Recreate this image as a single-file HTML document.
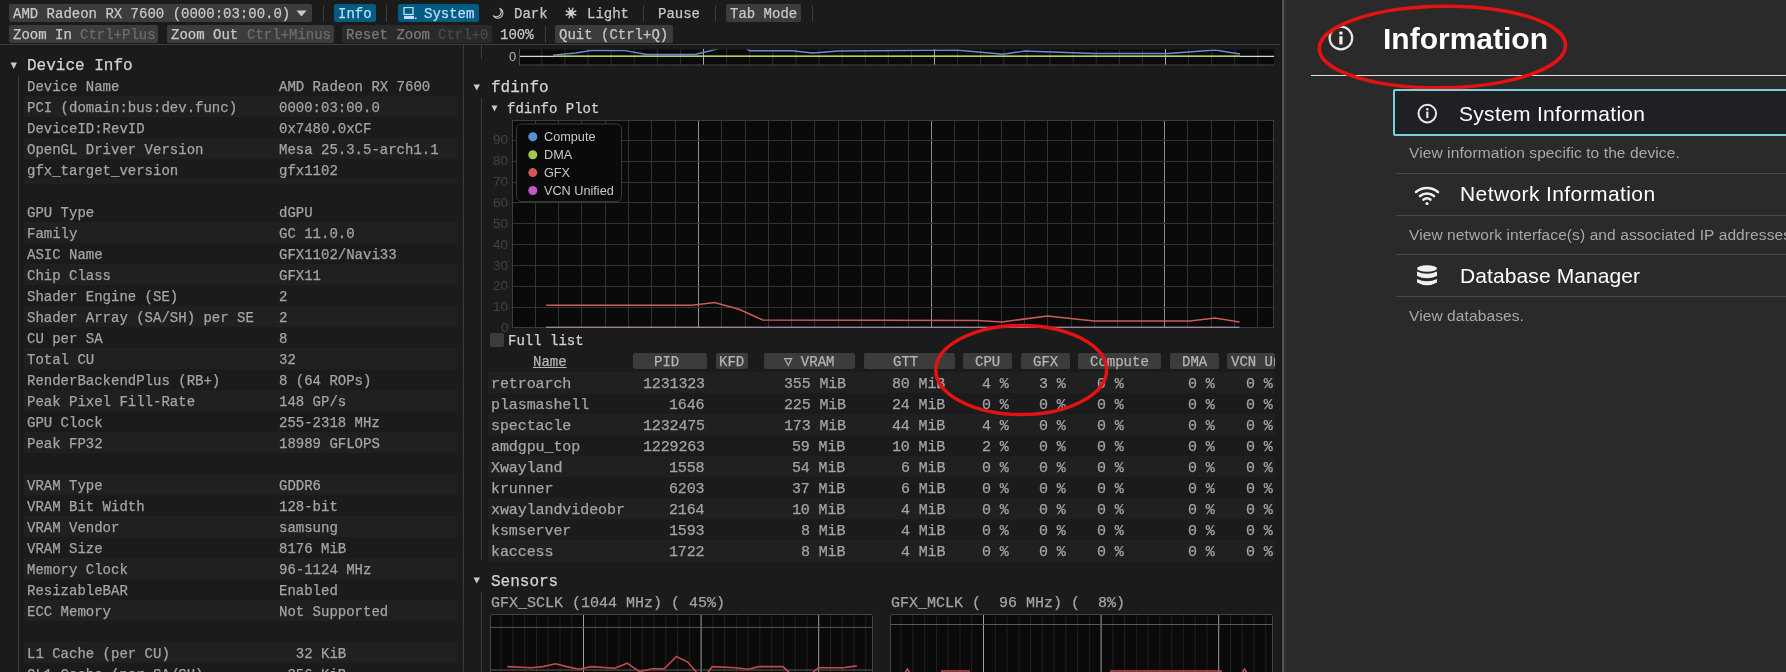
<!DOCTYPE html><html><head><meta charset="utf-8"><style>
html,body{margin:0;padding:0;width:1786px;height:672px;overflow:hidden;background:#1b1b1b;}
.t{position:absolute;white-space:pre;line-height:20px;font-family:"Liberation Mono", monospace;-webkit-text-stroke:0.25px currentColor;will-change:transform;}
.s{position:absolute;white-space:pre;line-height:30px;font-family:"Liberation Sans", sans-serif;will-change:transform;}
.r{position:absolute;}
svg{position:absolute;}
</style></head><body>
<div class="r" style="left:9px;top:4px;width:303px;height:18px;background:#3c3c3c;border-radius:2px"></div>
<div class="t" style="left:13.00px;top:4.17px;font-size:14px;color:#c8c8c8;letter-spacing:0px;">AMD Radeon RX 7600 (0000:03:00.0)</div>
<svg style="left:296px;top:10px" width="11" height="7"><path d="M0.5 0.5 L10.5 0.5 L5.5 6.5 Z" fill="#c8c8c8"/></svg>
<div class="r" style="left:323px;top:5px;width:1px;height:17px;background:#3c3c3c;"></div>
<div class="r" style="left:334px;top:4px;width:42px;height:18px;background:#005c80;border-radius:2px"></div>
<div class="t" style="left:338.00px;top:4.17px;font-size:14px;color:#c0deff;letter-spacing:0px;">Info</div>
<div class="r" style="left:386px;top:5px;width:1px;height:17px;background:#3c3c3c;"></div>
<div class="r" style="left:398px;top:4px;width:81px;height:18px;background:#005c80;border-radius:2px"></div>
<svg style="left:402.8px;top:7px" width="14" height="13"><rect x="1" y="0.5" width="9" height="7" fill="none" stroke="#c0deff" stroke-width="1.3"/><rect x="1" y="9" width="10" height="3" fill="#c0deff"/><rect x="12" y="10.5" width="1.5" height="1.5" fill="#c0deff"/></svg>
<div class="t" style="left:424.00px;top:4.17px;font-size:14px;color:#c0deff;letter-spacing:0px;">System</div>
<svg style="left:492px;top:7px" width="13" height="13"><path d="M7.5 1.2 A5.2 5.2 0 1 1 1.2 8.6 A4.6 4.6 0 0 0 7.5 1.2 Z" fill="none" stroke="#c8c8c8" stroke-width="1.1"/></svg>
<div class="t" style="left:514.00px;top:4.17px;font-size:14px;color:#c8c8c8;letter-spacing:0px;">Dark</div>
<svg style="left:565px;top:7px" width="12" height="12"><circle cx="6" cy="6" r="3" fill="#c8c8c8"/><line x1="8.77" y1="7.15" x2="10.80" y2="7.99" stroke="#c8c8c8" stroke-width="1.4" stroke-linecap="round"/><line x1="7.15" y1="8.77" x2="7.99" y2="10.80" stroke="#c8c8c8" stroke-width="1.4" stroke-linecap="round"/><line x1="4.85" y1="8.77" x2="4.01" y2="10.80" stroke="#c8c8c8" stroke-width="1.4" stroke-linecap="round"/><line x1="3.23" y1="7.15" x2="1.20" y2="7.99" stroke="#c8c8c8" stroke-width="1.4" stroke-linecap="round"/><line x1="3.23" y1="4.85" x2="1.20" y2="4.01" stroke="#c8c8c8" stroke-width="1.4" stroke-linecap="round"/><line x1="4.85" y1="3.23" x2="4.01" y2="1.20" stroke="#c8c8c8" stroke-width="1.4" stroke-linecap="round"/><line x1="7.15" y1="3.23" x2="7.99" y2="1.20" stroke="#c8c8c8" stroke-width="1.4" stroke-linecap="round"/><line x1="8.77" y1="4.85" x2="10.80" y2="4.01" stroke="#c8c8c8" stroke-width="1.4" stroke-linecap="round"/></svg>
<div class="t" style="left:587.00px;top:4.17px;font-size:14px;color:#c8c8c8;letter-spacing:0px;">Light</div>
<div class="r" style="left:643px;top:5px;width:1px;height:17px;background:#3c3c3c;"></div>
<div class="t" style="left:658.00px;top:4.17px;font-size:14px;color:#c8c8c8;letter-spacing:0px;">Pause</div>
<div class="r" style="left:715px;top:5px;width:1px;height:17px;background:#3c3c3c;"></div>
<div class="r" style="left:726px;top:4px;width:75px;height:18px;background:#3c3c3c;border-radius:2px"></div>
<div class="t" style="left:730.00px;top:4.17px;font-size:14px;color:#c8c8c8;letter-spacing:0px;">Tab Mode</div>
<div class="r" style="left:812px;top:5px;width:1px;height:17px;background:#3c3c3c;"></div>
<div class="r" style="left:9px;top:25px;width:149px;height:18px;background:#3c3c3c;border-radius:2px"></div>
<div class="t" style="left:13.00px;top:25.17px;font-size:14px;color:#c8c8c8;letter-spacing:0px;">Zoom In</div>
<div class="t" style="left:80.20px;top:25.17px;font-size:14px;color:#6c6c6c;letter-spacing:0px;">Ctrl+Plus</div>
<div class="r" style="left:167px;top:25px;width:167px;height:18px;background:#3c3c3c;border-radius:2px"></div>
<div class="t" style="left:171.00px;top:25.17px;font-size:14px;color:#c8c8c8;letter-spacing:0px;">Zoom Out</div>
<div class="t" style="left:246.60px;top:25.17px;font-size:14px;color:#6c6c6c;letter-spacing:0px;">Ctrl+Minus</div>
<div class="r" style="left:342px;top:25px;width:150px;height:18px;background:#2a2a2a;border-radius:2px"></div>
<div class="t" style="left:346.00px;top:25.17px;font-size:14px;color:#7a7a7a;letter-spacing:0px;">Reset Zoom</div>
<div class="t" style="left:438.40px;top:25.17px;font-size:14px;color:#4a4a4a;letter-spacing:0px;">Ctrl+0</div>
<div class="t" style="left:500.00px;top:25.17px;font-size:14px;color:#c8c8c8;letter-spacing:0px;">100%</div>
<div class="r" style="left:545px;top:26px;width:1px;height:17px;background:#3c3c3c;"></div>
<div class="r" style="left:555px;top:25px;width:118px;height:18px;background:#3c3c3c;border-radius:2px"></div>
<div class="t" style="left:559.00px;top:25.17px;font-size:14px;color:#c8c8c8;letter-spacing:0px;">Quit (Ctrl+Q)</div>
<div class="r" style="left:0px;top:44px;width:1280px;height:1px;background:#3c3c3c;"></div>
<div class="r" style="left:463px;top:45px;width:1px;height:627px;background:#3c3c3c;"></div>
<svg style="left:10px;top:62px" width="8" height="8"><path d="M0.5 0.5 L7 0.5 L3.75 7 Z" fill="#c8c8c8"/></svg>
<div class="t" style="left:27.00px;top:55.54px;font-size:16px;color:#d2d2d2;letter-spacing:0px;">Device Info</div>
<div class="r" style="left:18px;top:76px;width:1px;height:600px;background:#3c3c3c;"></div>
<div class="t" style="left:27.00px;top:76.87px;font-size:14px;color:#a4a4a4;letter-spacing:0px;">Device Name</div>
<div class="t" style="left:279.00px;top:76.87px;font-size:14px;color:#a4a4a4;letter-spacing:0px;">AMD Radeon RX 7600</div>
<div class="r" style="left:24px;top:96px;width:433px;height:21px;background:#202020;"></div>
<div class="t" style="left:27.00px;top:97.87px;font-size:14px;color:#a4a4a4;letter-spacing:0px;">PCI (domain:bus:dev.func)</div>
<div class="t" style="left:279.00px;top:97.87px;font-size:14px;color:#a4a4a4;letter-spacing:0px;">0000:03:00.0</div>
<div class="t" style="left:27.00px;top:118.87px;font-size:14px;color:#a4a4a4;letter-spacing:0px;">DeviceID:RevID</div>
<div class="t" style="left:279.00px;top:118.87px;font-size:14px;color:#a4a4a4;letter-spacing:0px;">0x7480.0xCF</div>
<div class="r" style="left:24px;top:138px;width:433px;height:21px;background:#202020;"></div>
<div class="t" style="left:27.00px;top:139.87px;font-size:14px;color:#a4a4a4;letter-spacing:0px;">OpenGL Driver Version</div>
<div class="t" style="left:279.00px;top:139.87px;font-size:14px;color:#a4a4a4;letter-spacing:0px;">Mesa 25.3.5-arch1.1</div>
<div class="t" style="left:27.00px;top:160.87px;font-size:14px;color:#a4a4a4;letter-spacing:0px;">gfx_target_version</div>
<div class="t" style="left:279.00px;top:160.87px;font-size:14px;color:#a4a4a4;letter-spacing:0px;">gfx1102</div>
<div class="r" style="left:24px;top:177.5px;width:433px;height:6.5px;background:#202020;"></div>
<div class="t" style="left:27.00px;top:202.87px;font-size:14px;color:#a4a4a4;letter-spacing:0px;">GPU Type</div>
<div class="t" style="left:279.00px;top:202.87px;font-size:14px;color:#a4a4a4;letter-spacing:0px;">dGPU</div>
<div class="r" style="left:24px;top:222px;width:433px;height:21px;background:#202020;"></div>
<div class="t" style="left:27.00px;top:223.87px;font-size:14px;color:#a4a4a4;letter-spacing:0px;">Family</div>
<div class="t" style="left:279.00px;top:223.87px;font-size:14px;color:#a4a4a4;letter-spacing:0px;">GC 11.0.0</div>
<div class="t" style="left:27.00px;top:244.87px;font-size:14px;color:#a4a4a4;letter-spacing:0px;">ASIC Name</div>
<div class="t" style="left:279.00px;top:244.87px;font-size:14px;color:#a4a4a4;letter-spacing:0px;">GFX1102/Navi33</div>
<div class="r" style="left:24px;top:264px;width:433px;height:21px;background:#202020;"></div>
<div class="t" style="left:27.00px;top:265.87px;font-size:14px;color:#a4a4a4;letter-spacing:0px;">Chip Class</div>
<div class="t" style="left:279.00px;top:265.87px;font-size:14px;color:#a4a4a4;letter-spacing:0px;">GFX11</div>
<div class="t" style="left:27.00px;top:286.87px;font-size:14px;color:#a4a4a4;letter-spacing:0px;">Shader Engine (SE)</div>
<div class="t" style="left:279.00px;top:286.87px;font-size:14px;color:#a4a4a4;letter-spacing:0px;">2</div>
<div class="r" style="left:24px;top:306px;width:433px;height:21px;background:#202020;"></div>
<div class="t" style="left:27.00px;top:307.87px;font-size:14px;color:#a4a4a4;letter-spacing:0px;">Shader Array (SA/SH) per SE</div>
<div class="t" style="left:279.00px;top:307.87px;font-size:14px;color:#a4a4a4;letter-spacing:0px;">2</div>
<div class="t" style="left:27.00px;top:328.87px;font-size:14px;color:#a4a4a4;letter-spacing:0px;">CU per SA</div>
<div class="t" style="left:279.00px;top:328.87px;font-size:14px;color:#a4a4a4;letter-spacing:0px;">8</div>
<div class="r" style="left:24px;top:348px;width:433px;height:21px;background:#202020;"></div>
<div class="t" style="left:27.00px;top:349.87px;font-size:14px;color:#a4a4a4;letter-spacing:0px;">Total CU</div>
<div class="t" style="left:279.00px;top:349.87px;font-size:14px;color:#a4a4a4;letter-spacing:0px;">32</div>
<div class="t" style="left:27.00px;top:370.87px;font-size:14px;color:#a4a4a4;letter-spacing:0px;">RenderBackendPlus (RB+)</div>
<div class="t" style="left:279.00px;top:370.87px;font-size:14px;color:#a4a4a4;letter-spacing:0px;">8 (64 ROPs)</div>
<div class="r" style="left:24px;top:390px;width:433px;height:21px;background:#202020;"></div>
<div class="t" style="left:27.00px;top:391.87px;font-size:14px;color:#a4a4a4;letter-spacing:0px;">Peak Pixel Fill-Rate</div>
<div class="t" style="left:279.00px;top:391.87px;font-size:14px;color:#a4a4a4;letter-spacing:0px;">148 GP/s</div>
<div class="t" style="left:27.00px;top:412.87px;font-size:14px;color:#a4a4a4;letter-spacing:0px;">GPU Clock</div>
<div class="t" style="left:279.00px;top:412.87px;font-size:14px;color:#a4a4a4;letter-spacing:0px;">255-2318 MHz</div>
<div class="r" style="left:24px;top:432px;width:433px;height:21px;background:#202020;"></div>
<div class="t" style="left:27.00px;top:433.87px;font-size:14px;color:#a4a4a4;letter-spacing:0px;">Peak FP32</div>
<div class="t" style="left:279.00px;top:433.87px;font-size:14px;color:#a4a4a4;letter-spacing:0px;">18989 GFLOPS</div>
<div class="r" style="left:24px;top:474px;width:433px;height:21px;background:#202020;"></div>
<div class="t" style="left:27.00px;top:475.87px;font-size:14px;color:#a4a4a4;letter-spacing:0px;">VRAM Type</div>
<div class="t" style="left:279.00px;top:475.87px;font-size:14px;color:#a4a4a4;letter-spacing:0px;">GDDR6</div>
<div class="t" style="left:27.00px;top:496.87px;font-size:14px;color:#a4a4a4;letter-spacing:0px;">VRAM Bit Width</div>
<div class="t" style="left:279.00px;top:496.87px;font-size:14px;color:#a4a4a4;letter-spacing:0px;">128-bit</div>
<div class="r" style="left:24px;top:516px;width:433px;height:21px;background:#202020;"></div>
<div class="t" style="left:27.00px;top:517.87px;font-size:14px;color:#a4a4a4;letter-spacing:0px;">VRAM Vendor</div>
<div class="t" style="left:279.00px;top:517.87px;font-size:14px;color:#a4a4a4;letter-spacing:0px;">samsung</div>
<div class="t" style="left:27.00px;top:538.87px;font-size:14px;color:#a4a4a4;letter-spacing:0px;">VRAM Size</div>
<div class="t" style="left:279.00px;top:538.87px;font-size:14px;color:#a4a4a4;letter-spacing:0px;">8176 MiB</div>
<div class="r" style="left:24px;top:558px;width:433px;height:21px;background:#202020;"></div>
<div class="t" style="left:27.00px;top:559.87px;font-size:14px;color:#a4a4a4;letter-spacing:0px;">Memory Clock</div>
<div class="t" style="left:279.00px;top:559.87px;font-size:14px;color:#a4a4a4;letter-spacing:0px;">96-1124 MHz</div>
<div class="t" style="left:27.00px;top:580.87px;font-size:14px;color:#a4a4a4;letter-spacing:0px;">ResizableBAR</div>
<div class="t" style="left:279.00px;top:580.87px;font-size:14px;color:#a4a4a4;letter-spacing:0px;">Enabled</div>
<div class="r" style="left:24px;top:600px;width:433px;height:21px;background:#202020;"></div>
<div class="t" style="left:27.00px;top:601.87px;font-size:14px;color:#a4a4a4;letter-spacing:0px;">ECC Memory</div>
<div class="t" style="left:279.00px;top:601.87px;font-size:14px;color:#a4a4a4;letter-spacing:0px;">Not Supported</div>
<div class="r" style="left:24px;top:642px;width:433px;height:21px;background:#202020;"></div>
<div class="t" style="left:27.00px;top:643.87px;font-size:14px;color:#a4a4a4;letter-spacing:0px;">L1 Cache (per CU)</div>
<div class="t" style="left:279.00px;top:643.87px;font-size:14px;color:#a4a4a4;letter-spacing:0px;">  32 KiB</div>
<div class="t" style="left:27.00px;top:664.87px;font-size:14px;color:#a4a4a4;letter-spacing:0px;">GL1 Cache (per SA/SH)</div>
<div class="t" style="left:279.00px;top:664.87px;font-size:14px;color:#a4a4a4;letter-spacing:0px;"> 256 KiB</div>
<svg style="left:519px;top:49px" width="756" height="18"><defs><clipPath id="tpc"><rect x="0" y="0.5" width="755" height="17"/></clipPath></defs><rect x="0" y="0.5" width="755" height="16" fill="#0a0a0a"/><line x1="22.8" y1="0" x2="22.8" y2="16" stroke="#2e2e2e" stroke-width="1"/><line x1="45.9" y1="0" x2="45.9" y2="16" stroke="#2e2e2e" stroke-width="1"/><line x1="69.0" y1="0" x2="69.0" y2="16" stroke="#2e2e2e" stroke-width="1"/><line x1="92.1" y1="0" x2="92.1" y2="16" stroke="#2e2e2e" stroke-width="1"/><line x1="115.2" y1="0" x2="115.2" y2="16" stroke="#2e2e2e" stroke-width="1"/><line x1="138.3" y1="0" x2="138.3" y2="16" stroke="#2e2e2e" stroke-width="1"/><line x1="161.4" y1="0" x2="161.4" y2="16" stroke="#2e2e2e" stroke-width="1"/><line x1="184.5" y1="0" x2="184.5" y2="16" stroke="#a8a8a8" stroke-width="1"/><line x1="207.6" y1="0" x2="207.6" y2="16" stroke="#2e2e2e" stroke-width="1"/><line x1="230.7" y1="0" x2="230.7" y2="16" stroke="#2e2e2e" stroke-width="1"/><line x1="253.8" y1="0" x2="253.8" y2="16" stroke="#2e2e2e" stroke-width="1"/><line x1="276.9" y1="0" x2="276.9" y2="16" stroke="#2e2e2e" stroke-width="1"/><line x1="300.0" y1="0" x2="300.0" y2="16" stroke="#2e2e2e" stroke-width="1"/><line x1="323.1" y1="0" x2="323.1" y2="16" stroke="#2e2e2e" stroke-width="1"/><line x1="346.2" y1="0" x2="346.2" y2="16" stroke="#2e2e2e" stroke-width="1"/><line x1="369.3" y1="0" x2="369.3" y2="16" stroke="#2e2e2e" stroke-width="1"/><line x1="392.4" y1="0" x2="392.4" y2="16" stroke="#2e2e2e" stroke-width="1"/><line x1="415.5" y1="0" x2="415.5" y2="16" stroke="#a8a8a8" stroke-width="1"/><line x1="438.6" y1="0" x2="438.6" y2="16" stroke="#2e2e2e" stroke-width="1"/><line x1="461.7" y1="0" x2="461.7" y2="16" stroke="#2e2e2e" stroke-width="1"/><line x1="484.8" y1="0" x2="484.8" y2="16" stroke="#2e2e2e" stroke-width="1"/><line x1="507.9" y1="0" x2="507.9" y2="16" stroke="#2e2e2e" stroke-width="1"/><line x1="531.0" y1="0" x2="531.0" y2="16" stroke="#2e2e2e" stroke-width="1"/><line x1="554.1" y1="0" x2="554.1" y2="16" stroke="#2e2e2e" stroke-width="1"/><line x1="577.2" y1="0" x2="577.2" y2="16" stroke="#2e2e2e" stroke-width="1"/><line x1="600.3" y1="0" x2="600.3" y2="16" stroke="#2e2e2e" stroke-width="1"/><line x1="623.4" y1="0" x2="623.4" y2="16" stroke="#2e2e2e" stroke-width="1"/><line x1="646.5" y1="0" x2="646.5" y2="16" stroke="#a8a8a8" stroke-width="1"/><line x1="669.6" y1="0" x2="669.6" y2="16" stroke="#2e2e2e" stroke-width="1"/><line x1="692.7" y1="0" x2="692.7" y2="16" stroke="#2e2e2e" stroke-width="1"/><line x1="715.8" y1="0" x2="715.8" y2="16" stroke="#2e2e2e" stroke-width="1"/><line x1="738.9" y1="0" x2="738.9" y2="16" stroke="#2e2e2e" stroke-width="1"/><line x1="0" y1="7.3" x2="755" y2="7.3" stroke="#d8d8d8" stroke-width="1.2"/><line x1="0.5" y1="0" x2="0.5" y2="16.5" stroke="#4a4a4a" stroke-width="1"/><line x1="0" y1="16" x2="755" y2="16" stroke="#4a4a4a" stroke-width="1"/><line x1="34" y1="7.3" x2="721" y2="7.3" stroke="#b0d060" stroke-width="1.4"/><polyline clip-path="url(#tpc)" points="34.0,6.1 57.0,4.0 73.0,1.2 106.0,1.6 128.0,5.5 176.0,5.5 196.0,0.5 201.0,-1.0 226.0,-1.0 231.0,1.7 273.0,1.7 294.0,4.0 319.0,2.0 437.0,1.0 484.0,5.3 506.0,2.0 575.0,4.5 649.0,4.5 696.0,1.0 721.0,5.0" fill="none" stroke="#6a8ccc" stroke-width="1.4"/></svg>
<div class="s" style="right:1269.50px;top:41.50px;font-size:13px;color:#b4b4b4;font-weight:400;letter-spacing:0px;text-align:right">0</div>
<div class="r" style="left:481px;top:45px;width:1px;height:14px;background:#3c3c3c;"></div>
<svg style="left:473px;top:84px" width="8" height="8"><path d="M0.5 0.5 L7 0.5 L3.75 6.5 Z" fill="#c8c8c8"/></svg>
<div class="t" style="left:491.00px;top:77.84px;font-size:16px;color:#d2d2d2;letter-spacing:0px;">fdinfo</div>
<div class="r" style="left:481px;top:98px;width:1px;height:462px;background:#3c3c3c;"></div>
<svg style="left:491px;top:105px" width="8" height="8"><path d="M0.5 0.5 L6.5 0.5 L3.5 6.5 Z" fill="#c8c8c8"/></svg>
<div class="t" style="left:507.00px;top:98.97px;font-size:14px;color:#d2d2d2;letter-spacing:0px;">fdinfo Plot</div>
<svg style="left:512px;top:120px" width="762" height="208"><rect x="0" y="0" width="762" height="208" fill="#0a0a0a"/><line x1="0.50" y1="0" x2="0.50" y2="208" stroke="#333333" stroke-width="1"/><line x1="23.50" y1="0" x2="23.50" y2="208" stroke="#333333" stroke-width="1"/><line x1="46.50" y1="0" x2="46.50" y2="208" stroke="#333333" stroke-width="1"/><line x1="69.50" y1="0" x2="69.50" y2="208" stroke="#333333" stroke-width="1"/><line x1="93.50" y1="0" x2="93.50" y2="208" stroke="#333333" stroke-width="1"/><line x1="116.50" y1="0" x2="116.50" y2="208" stroke="#333333" stroke-width="1"/><line x1="139.50" y1="0" x2="139.50" y2="208" stroke="#333333" stroke-width="1"/><line x1="163.50" y1="0" x2="163.50" y2="208" stroke="#333333" stroke-width="1"/><line x1="186.50" y1="0" x2="186.50" y2="208" stroke="#909090" stroke-width="1"/><line x1="209.50" y1="0" x2="209.50" y2="208" stroke="#333333" stroke-width="1"/><line x1="233.50" y1="0" x2="233.50" y2="208" stroke="#333333" stroke-width="1"/><line x1="256.50" y1="0" x2="256.50" y2="208" stroke="#333333" stroke-width="1"/><line x1="279.50" y1="0" x2="279.50" y2="208" stroke="#333333" stroke-width="1"/><line x1="302.50" y1="0" x2="302.50" y2="208" stroke="#333333" stroke-width="1"/><line x1="326.50" y1="0" x2="326.50" y2="208" stroke="#333333" stroke-width="1"/><line x1="349.50" y1="0" x2="349.50" y2="208" stroke="#333333" stroke-width="1"/><line x1="372.50" y1="0" x2="372.50" y2="208" stroke="#333333" stroke-width="1"/><line x1="396.50" y1="0" x2="396.50" y2="208" stroke="#333333" stroke-width="1"/><line x1="419.50" y1="0" x2="419.50" y2="208" stroke="#909090" stroke-width="1"/><line x1="442.50" y1="0" x2="442.50" y2="208" stroke="#333333" stroke-width="1"/><line x1="466.50" y1="0" x2="466.50" y2="208" stroke="#333333" stroke-width="1"/><line x1="489.50" y1="0" x2="489.50" y2="208" stroke="#333333" stroke-width="1"/><line x1="512.50" y1="0" x2="512.50" y2="208" stroke="#333333" stroke-width="1"/><line x1="535.50" y1="0" x2="535.50" y2="208" stroke="#333333" stroke-width="1"/><line x1="559.50" y1="0" x2="559.50" y2="208" stroke="#333333" stroke-width="1"/><line x1="582.50" y1="0" x2="582.50" y2="208" stroke="#333333" stroke-width="1"/><line x1="605.50" y1="0" x2="605.50" y2="208" stroke="#333333" stroke-width="1"/><line x1="629.50" y1="0" x2="629.50" y2="208" stroke="#333333" stroke-width="1"/><line x1="652.50" y1="0" x2="652.50" y2="208" stroke="#909090" stroke-width="1"/><line x1="675.50" y1="0" x2="675.50" y2="208" stroke="#333333" stroke-width="1"/><line x1="699.50" y1="0" x2="699.50" y2="208" stroke="#333333" stroke-width="1"/><line x1="722.50" y1="0" x2="722.50" y2="208" stroke="#333333" stroke-width="1"/><line x1="745.50" y1="0" x2="745.50" y2="208" stroke="#333333" stroke-width="1"/><line x1="0" y1="208.5" x2="762" y2="208.5" stroke="#333333" stroke-width="1"/><line x1="0" y1="187.5" x2="762" y2="187.5" stroke="#333333" stroke-width="1"/><line x1="0" y1="166.5" x2="762" y2="166.5" stroke="#333333" stroke-width="1"/><line x1="0" y1="145.5" x2="762" y2="145.5" stroke="#333333" stroke-width="1"/><line x1="0" y1="124.5" x2="762" y2="124.5" stroke="#333333" stroke-width="1"/><line x1="0" y1="103.5" x2="762" y2="103.5" stroke="#333333" stroke-width="1"/><line x1="0" y1="82.5" x2="762" y2="82.5" stroke="#333333" stroke-width="1"/><line x1="0" y1="62.5" x2="762" y2="62.5" stroke="#333333" stroke-width="1"/><line x1="0" y1="41.5" x2="762" y2="41.5" stroke="#333333" stroke-width="1"/><line x1="0" y1="20.5" x2="762" y2="20.5" stroke="#333333" stroke-width="1"/><line x1="0" y1="-0.5" x2="762" y2="-0.5" stroke="#333333" stroke-width="1"/><rect x="0.5" y="0.5" width="761" height="207" fill="none" stroke="#3c3c3c"/><polyline points="34.2,185.2 180.0,185.2 202.5,182.5 227.0,189.2 250.7,200.0 466.0,200.4 490.0,202.0 535.5,195.9 582.0,201.0 678.0,201.0 703.0,198.0 727.5,202.0" fill="none" stroke="#cc5c5a" stroke-width="1.5"/><line x1="34.200000000000045" y1="207.2" x2="727.5" y2="207.2" stroke="#d0a0d0" stroke-width="1"/><rect x="4.5" y="4" width="105" height="77.5" rx="5" fill="#0a0a0a" stroke="#383838"/><circle cx="20.799999999999955" cy="16.8" r="4.5" fill="#5b8fd6"/><circle cx="20.799999999999955" cy="34.7" r="4.5" fill="#a5c94e"/><circle cx="20.799999999999955" cy="52.6" r="4.5" fill="#d0584e"/><circle cx="20.799999999999955" cy="70.5" r="4.5" fill="#c058c8"/></svg>
<div class="s" style="left:543.50px;top:121.90px;font-size:12.7px;color:#c8c8c8;font-weight:400;letter-spacing:0px">Compute</div>
<div class="s" style="left:543.50px;top:139.80px;font-size:12.7px;color:#c8c8c8;font-weight:400;letter-spacing:0px">DMA</div>
<div class="s" style="left:543.50px;top:157.70px;font-size:12.7px;color:#c8c8c8;font-weight:400;letter-spacing:0px">GFX</div>
<div class="s" style="left:543.50px;top:175.60px;font-size:12.7px;color:#c8c8c8;font-weight:400;letter-spacing:0px">VCN Unified</div>
<div class="s" style="right:1277.50px;top:313.22px;font-size:13.5px;color:#424242;font-weight:400;letter-spacing:0px;text-align:right">0</div>
<div class="s" style="right:1277.50px;top:292.33px;font-size:13.5px;color:#424242;font-weight:400;letter-spacing:0px;text-align:right">10</div>
<div class="s" style="right:1277.50px;top:271.44px;font-size:13.5px;color:#424242;font-weight:400;letter-spacing:0px;text-align:right">20</div>
<div class="s" style="right:1277.50px;top:250.55px;font-size:13.5px;color:#424242;font-weight:400;letter-spacing:0px;text-align:right">30</div>
<div class="s" style="right:1277.50px;top:229.66px;font-size:13.5px;color:#424242;font-weight:400;letter-spacing:0px;text-align:right">40</div>
<div class="s" style="right:1277.50px;top:208.77px;font-size:13.5px;color:#424242;font-weight:400;letter-spacing:0px;text-align:right">50</div>
<div class="s" style="right:1277.50px;top:187.88px;font-size:13.5px;color:#424242;font-weight:400;letter-spacing:0px;text-align:right">60</div>
<div class="s" style="right:1277.50px;top:166.99px;font-size:13.5px;color:#424242;font-weight:400;letter-spacing:0px;text-align:right">70</div>
<div class="s" style="right:1277.50px;top:146.10px;font-size:13.5px;color:#424242;font-weight:400;letter-spacing:0px;text-align:right">80</div>
<div class="s" style="right:1277.50px;top:125.21px;font-size:13.5px;color:#424242;font-weight:400;letter-spacing:0px;text-align:right">90</div>
<div class="r" style="left:490px;top:333px;width:14px;height:14px;background:#3c3c3c;border-radius:2px"></div>
<div class="t" style="left:508.00px;top:331.27px;font-size:14px;color:#d2d2d2;letter-spacing:0px;">Full list</div>
<div class="t" style="left:532.60px;top:352.27px;font-size:14px;color:#b4b4b4;letter-spacing:0px;text-decoration:underline;text-underline-offset:1px">Name</div>
<div class="r" style="left:633px;top:353px;width:74px;height:16px;background:#3c3c3c;border-radius:2px"></div>
<div class="r" style="left:716px;top:353px;width:32px;height:16px;background:#3c3c3c;border-radius:2px"></div>
<div class="r" style="left:764px;top:353px;width:91px;height:16px;background:#3c3c3c;border-radius:2px"></div>
<div class="r" style="left:864px;top:353px;width:91px;height:16px;background:#3c3c3c;border-radius:2px"></div>
<div class="r" style="left:963px;top:353px;width:49px;height:16px;background:#3c3c3c;border-radius:2px"></div>
<div class="r" style="left:1021px;top:353px;width:49px;height:16px;background:#3c3c3c;border-radius:2px"></div>
<div class="r" style="left:1078px;top:353px;width:83px;height:16px;background:#3c3c3c;border-radius:2px"></div>
<div class="r" style="left:1170px;top:353px;width:49px;height:16px;background:#3c3c3c;border-radius:2px"></div>
<div class="r" style="left:1227px;top:353px;width:48px;height:16px;background:#3c3c3c;border-radius:2px"></div>
<div style="position:absolute;left:0;top:0;width:1275px;height:672px;overflow:hidden">
<div class="t" style="left:653.90px;top:352.27px;font-size:14px;color:#b4b4b4;letter-spacing:0px;">PID</div>
<div class="t" style="left:719.40px;top:352.27px;font-size:14px;color:#b4b4b4;letter-spacing:0px;">KFD</div>
<div class="t" style="left:784.30px;top:352.27px;font-size:14px;color:#b4b4b4;letter-spacing:0px;">▽ VRAM</div>
<div class="t" style="left:893.40px;top:352.27px;font-size:14px;color:#b4b4b4;letter-spacing:0px;">GTT</div>
<div class="t" style="left:974.90px;top:352.27px;font-size:14px;color:#b4b4b4;letter-spacing:0px;">CPU</div>
<div class="t" style="left:1032.90px;top:352.27px;font-size:14px;color:#b4b4b4;letter-spacing:0px;">GFX</div>
<div class="t" style="left:1090.10px;top:352.27px;font-size:14px;color:#b4b4b4;letter-spacing:0px;">Compute</div>
<div class="t" style="left:1181.90px;top:352.27px;font-size:14px;color:#b4b4b4;letter-spacing:0px;">DMA</div>
<div class="t" style="left:1231.00px;top:352.27px;font-size:14px;color:#b4b4b4;letter-spacing:0px;">VCN Unified</div>
</div>
<div class="r" style="left:488px;top:372.3px;width:787px;height:20.8px;background:#202020;"></div>
<div class="t" style="left:490.50px;top:374.60px;font-size:15px;color:#a4a4a4;letter-spacing:-0.08px;">retroarch</div>
<div class="t" style="right:1081.40px;top:374.60px;font-size:15px;color:#a4a4a4;letter-spacing:-0.15px;text-align:right">1231323</div>
<div class="t" style="right:940.50px;top:374.60px;font-size:15px;color:#a4a4a4;letter-spacing:-0.15px;text-align:right">355 MiB</div>
<div class="t" style="right:841.00px;top:374.60px;font-size:15px;color:#a4a4a4;letter-spacing:-0.15px;text-align:right">80 MiB</div>
<div class="t" style="right:777.50px;top:374.60px;font-size:15px;color:#a4a4a4;letter-spacing:-0.15px;text-align:right">4 %</div>
<div class="t" style="right:720.00px;top:374.60px;font-size:15px;color:#a4a4a4;letter-spacing:-0.15px;text-align:right">3 %</div>
<div class="t" style="right:662.50px;top:374.60px;font-size:15px;color:#a4a4a4;letter-spacing:-0.15px;text-align:right">0 %</div>
<div class="t" style="right:571.00px;top:374.60px;font-size:15px;color:#a4a4a4;letter-spacing:-0.15px;text-align:right">0 %</div>
<div class="t" style="right:513.50px;top:374.60px;font-size:15px;color:#a4a4a4;letter-spacing:-0.15px;text-align:right">0 %</div>
<div class="t" style="left:490.50px;top:395.60px;font-size:15px;color:#a4a4a4;letter-spacing:-0.08px;">plasmashell</div>
<div class="t" style="right:1081.40px;top:395.60px;font-size:15px;color:#a4a4a4;letter-spacing:-0.15px;text-align:right">1646</div>
<div class="t" style="right:940.50px;top:395.60px;font-size:15px;color:#a4a4a4;letter-spacing:-0.15px;text-align:right">225 MiB</div>
<div class="t" style="right:841.00px;top:395.60px;font-size:15px;color:#a4a4a4;letter-spacing:-0.15px;text-align:right">24 MiB</div>
<div class="t" style="right:777.50px;top:395.60px;font-size:15px;color:#a4a4a4;letter-spacing:-0.15px;text-align:right">0 %</div>
<div class="t" style="right:720.00px;top:395.60px;font-size:15px;color:#a4a4a4;letter-spacing:-0.15px;text-align:right">0 %</div>
<div class="t" style="right:662.50px;top:395.60px;font-size:15px;color:#a4a4a4;letter-spacing:-0.15px;text-align:right">0 %</div>
<div class="t" style="right:571.00px;top:395.60px;font-size:15px;color:#a4a4a4;letter-spacing:-0.15px;text-align:right">0 %</div>
<div class="t" style="right:513.50px;top:395.60px;font-size:15px;color:#a4a4a4;letter-spacing:-0.15px;text-align:right">0 %</div>
<div class="r" style="left:488px;top:414.3px;width:787px;height:20.8px;background:#202020;"></div>
<div class="t" style="left:490.50px;top:416.60px;font-size:15px;color:#a4a4a4;letter-spacing:-0.08px;">spectacle</div>
<div class="t" style="right:1081.40px;top:416.60px;font-size:15px;color:#a4a4a4;letter-spacing:-0.15px;text-align:right">1232475</div>
<div class="t" style="right:940.50px;top:416.60px;font-size:15px;color:#a4a4a4;letter-spacing:-0.15px;text-align:right">173 MiB</div>
<div class="t" style="right:841.00px;top:416.60px;font-size:15px;color:#a4a4a4;letter-spacing:-0.15px;text-align:right">44 MiB</div>
<div class="t" style="right:777.50px;top:416.60px;font-size:15px;color:#a4a4a4;letter-spacing:-0.15px;text-align:right">4 %</div>
<div class="t" style="right:720.00px;top:416.60px;font-size:15px;color:#a4a4a4;letter-spacing:-0.15px;text-align:right">0 %</div>
<div class="t" style="right:662.50px;top:416.60px;font-size:15px;color:#a4a4a4;letter-spacing:-0.15px;text-align:right">0 %</div>
<div class="t" style="right:571.00px;top:416.60px;font-size:15px;color:#a4a4a4;letter-spacing:-0.15px;text-align:right">0 %</div>
<div class="t" style="right:513.50px;top:416.60px;font-size:15px;color:#a4a4a4;letter-spacing:-0.15px;text-align:right">0 %</div>
<div class="t" style="left:490.50px;top:437.60px;font-size:15px;color:#a4a4a4;letter-spacing:-0.08px;">amdgpu_top</div>
<div class="t" style="right:1081.40px;top:437.60px;font-size:15px;color:#a4a4a4;letter-spacing:-0.15px;text-align:right">1229263</div>
<div class="t" style="right:940.50px;top:437.60px;font-size:15px;color:#a4a4a4;letter-spacing:-0.15px;text-align:right">59 MiB</div>
<div class="t" style="right:841.00px;top:437.60px;font-size:15px;color:#a4a4a4;letter-spacing:-0.15px;text-align:right">10 MiB</div>
<div class="t" style="right:777.50px;top:437.60px;font-size:15px;color:#a4a4a4;letter-spacing:-0.15px;text-align:right">2 %</div>
<div class="t" style="right:720.00px;top:437.60px;font-size:15px;color:#a4a4a4;letter-spacing:-0.15px;text-align:right">0 %</div>
<div class="t" style="right:662.50px;top:437.60px;font-size:15px;color:#a4a4a4;letter-spacing:-0.15px;text-align:right">0 %</div>
<div class="t" style="right:571.00px;top:437.60px;font-size:15px;color:#a4a4a4;letter-spacing:-0.15px;text-align:right">0 %</div>
<div class="t" style="right:513.50px;top:437.60px;font-size:15px;color:#a4a4a4;letter-spacing:-0.15px;text-align:right">0 %</div>
<div class="r" style="left:488px;top:456.3px;width:787px;height:20.8px;background:#202020;"></div>
<div class="t" style="left:490.50px;top:458.60px;font-size:15px;color:#a4a4a4;letter-spacing:-0.08px;">Xwayland</div>
<div class="t" style="right:1081.40px;top:458.60px;font-size:15px;color:#a4a4a4;letter-spacing:-0.15px;text-align:right">1558</div>
<div class="t" style="right:940.50px;top:458.60px;font-size:15px;color:#a4a4a4;letter-spacing:-0.15px;text-align:right">54 MiB</div>
<div class="t" style="right:841.00px;top:458.60px;font-size:15px;color:#a4a4a4;letter-spacing:-0.15px;text-align:right">6 MiB</div>
<div class="t" style="right:777.50px;top:458.60px;font-size:15px;color:#a4a4a4;letter-spacing:-0.15px;text-align:right">0 %</div>
<div class="t" style="right:720.00px;top:458.60px;font-size:15px;color:#a4a4a4;letter-spacing:-0.15px;text-align:right">0 %</div>
<div class="t" style="right:662.50px;top:458.60px;font-size:15px;color:#a4a4a4;letter-spacing:-0.15px;text-align:right">0 %</div>
<div class="t" style="right:571.00px;top:458.60px;font-size:15px;color:#a4a4a4;letter-spacing:-0.15px;text-align:right">0 %</div>
<div class="t" style="right:513.50px;top:458.60px;font-size:15px;color:#a4a4a4;letter-spacing:-0.15px;text-align:right">0 %</div>
<div class="t" style="left:490.50px;top:479.60px;font-size:15px;color:#a4a4a4;letter-spacing:-0.08px;">krunner</div>
<div class="t" style="right:1081.40px;top:479.60px;font-size:15px;color:#a4a4a4;letter-spacing:-0.15px;text-align:right">6203</div>
<div class="t" style="right:940.50px;top:479.60px;font-size:15px;color:#a4a4a4;letter-spacing:-0.15px;text-align:right">37 MiB</div>
<div class="t" style="right:841.00px;top:479.60px;font-size:15px;color:#a4a4a4;letter-spacing:-0.15px;text-align:right">6 MiB</div>
<div class="t" style="right:777.50px;top:479.60px;font-size:15px;color:#a4a4a4;letter-spacing:-0.15px;text-align:right">0 %</div>
<div class="t" style="right:720.00px;top:479.60px;font-size:15px;color:#a4a4a4;letter-spacing:-0.15px;text-align:right">0 %</div>
<div class="t" style="right:662.50px;top:479.60px;font-size:15px;color:#a4a4a4;letter-spacing:-0.15px;text-align:right">0 %</div>
<div class="t" style="right:571.00px;top:479.60px;font-size:15px;color:#a4a4a4;letter-spacing:-0.15px;text-align:right">0 %</div>
<div class="t" style="right:513.50px;top:479.60px;font-size:15px;color:#a4a4a4;letter-spacing:-0.15px;text-align:right">0 %</div>
<div class="r" style="left:488px;top:498.3px;width:787px;height:20.8px;background:#202020;"></div>
<div class="t" style="left:490.50px;top:500.60px;font-size:15px;color:#a4a4a4;letter-spacing:-0.08px;">xwaylandvideobr</div>
<div class="t" style="right:1081.40px;top:500.60px;font-size:15px;color:#a4a4a4;letter-spacing:-0.15px;text-align:right">2164</div>
<div class="t" style="right:940.50px;top:500.60px;font-size:15px;color:#a4a4a4;letter-spacing:-0.15px;text-align:right">10 MiB</div>
<div class="t" style="right:841.00px;top:500.60px;font-size:15px;color:#a4a4a4;letter-spacing:-0.15px;text-align:right">4 MiB</div>
<div class="t" style="right:777.50px;top:500.60px;font-size:15px;color:#a4a4a4;letter-spacing:-0.15px;text-align:right">0 %</div>
<div class="t" style="right:720.00px;top:500.60px;font-size:15px;color:#a4a4a4;letter-spacing:-0.15px;text-align:right">0 %</div>
<div class="t" style="right:662.50px;top:500.60px;font-size:15px;color:#a4a4a4;letter-spacing:-0.15px;text-align:right">0 %</div>
<div class="t" style="right:571.00px;top:500.60px;font-size:15px;color:#a4a4a4;letter-spacing:-0.15px;text-align:right">0 %</div>
<div class="t" style="right:513.50px;top:500.60px;font-size:15px;color:#a4a4a4;letter-spacing:-0.15px;text-align:right">0 %</div>
<div class="t" style="left:490.50px;top:521.60px;font-size:15px;color:#a4a4a4;letter-spacing:-0.08px;">ksmserver</div>
<div class="t" style="right:1081.40px;top:521.60px;font-size:15px;color:#a4a4a4;letter-spacing:-0.15px;text-align:right">1593</div>
<div class="t" style="right:940.50px;top:521.60px;font-size:15px;color:#a4a4a4;letter-spacing:-0.15px;text-align:right">8 MiB</div>
<div class="t" style="right:841.00px;top:521.60px;font-size:15px;color:#a4a4a4;letter-spacing:-0.15px;text-align:right">4 MiB</div>
<div class="t" style="right:777.50px;top:521.60px;font-size:15px;color:#a4a4a4;letter-spacing:-0.15px;text-align:right">0 %</div>
<div class="t" style="right:720.00px;top:521.60px;font-size:15px;color:#a4a4a4;letter-spacing:-0.15px;text-align:right">0 %</div>
<div class="t" style="right:662.50px;top:521.60px;font-size:15px;color:#a4a4a4;letter-spacing:-0.15px;text-align:right">0 %</div>
<div class="t" style="right:571.00px;top:521.60px;font-size:15px;color:#a4a4a4;letter-spacing:-0.15px;text-align:right">0 %</div>
<div class="t" style="right:513.50px;top:521.60px;font-size:15px;color:#a4a4a4;letter-spacing:-0.15px;text-align:right">0 %</div>
<div class="r" style="left:488px;top:540.3px;width:787px;height:20.8px;background:#202020;"></div>
<div class="t" style="left:490.50px;top:542.60px;font-size:15px;color:#a4a4a4;letter-spacing:-0.08px;">kaccess</div>
<div class="t" style="right:1081.40px;top:542.60px;font-size:15px;color:#a4a4a4;letter-spacing:-0.15px;text-align:right">1722</div>
<div class="t" style="right:940.50px;top:542.60px;font-size:15px;color:#a4a4a4;letter-spacing:-0.15px;text-align:right">8 MiB</div>
<div class="t" style="right:841.00px;top:542.60px;font-size:15px;color:#a4a4a4;letter-spacing:-0.15px;text-align:right">4 MiB</div>
<div class="t" style="right:777.50px;top:542.60px;font-size:15px;color:#a4a4a4;letter-spacing:-0.15px;text-align:right">0 %</div>
<div class="t" style="right:720.00px;top:542.60px;font-size:15px;color:#a4a4a4;letter-spacing:-0.15px;text-align:right">0 %</div>
<div class="t" style="right:662.50px;top:542.60px;font-size:15px;color:#a4a4a4;letter-spacing:-0.15px;text-align:right">0 %</div>
<div class="t" style="right:571.00px;top:542.60px;font-size:15px;color:#a4a4a4;letter-spacing:-0.15px;text-align:right">0 %</div>
<div class="t" style="right:513.50px;top:542.60px;font-size:15px;color:#a4a4a4;letter-spacing:-0.15px;text-align:right">0 %</div>
<svg style="left:473px;top:577px" width="8" height="8"><path d="M0.5 0.5 L7 0.5 L3.75 6.5 Z" fill="#c8c8c8"/></svg>
<div class="t" style="left:490.50px;top:571.74px;font-size:16px;color:#d2d2d2;letter-spacing:0px;">Sensors</div>
<div class="r" style="left:481px;top:592px;width:1px;height:80px;background:#3c3c3c;"></div>
<div class="t" style="left:490.50px;top:594.30px;font-size:15px;color:#a4a4a4;letter-spacing:0px;">GFX_SCLK (1044 MHz) ( 45%)</div>
<div class="t" style="left:890.50px;top:594.30px;font-size:15px;color:#a4a4a4;letter-spacing:0px;">GFX_MCLK (  96 MHz) (  8%)</div>
<svg style="left:490px;top:614px" width="383" height="58"><rect x="0" y="0.5" width="383" height="58" rx="2" fill="#0a0a0a"/><line x1="11.2" y1="0" x2="11.2" y2="58" stroke="#202020"/><line x1="22.9" y1="0" x2="22.9" y2="58" stroke="#202020"/><line x1="34.7" y1="0" x2="34.7" y2="58" stroke="#202020"/><line x1="46.5" y1="0" x2="46.5" y2="58" stroke="#202020"/><line x1="58.2" y1="0" x2="58.2" y2="58" stroke="#202020"/><line x1="70.0" y1="0" x2="70.0" y2="58" stroke="#202020"/><line x1="81.7" y1="0" x2="81.7" y2="58" stroke="#202020"/><line x1="93.5" y1="0" x2="93.5" y2="58" stroke="#a0a0a0"/><line x1="105.3" y1="0" x2="105.3" y2="58" stroke="#202020"/><line x1="117.0" y1="0" x2="117.0" y2="58" stroke="#202020"/><line x1="128.8" y1="0" x2="128.8" y2="58" stroke="#202020"/><line x1="140.5" y1="0" x2="140.5" y2="58" stroke="#202020"/><line x1="152.3" y1="0" x2="152.3" y2="58" stroke="#202020"/><line x1="164.1" y1="0" x2="164.1" y2="58" stroke="#202020"/><line x1="175.8" y1="0" x2="175.8" y2="58" stroke="#202020"/><line x1="187.6" y1="0" x2="187.6" y2="58" stroke="#202020"/><line x1="199.3" y1="0" x2="199.3" y2="58" stroke="#202020"/><line x1="211.1" y1="0" x2="211.1" y2="58" stroke="#a0a0a0"/><line x1="222.9" y1="0" x2="222.9" y2="58" stroke="#202020"/><line x1="234.6" y1="0" x2="234.6" y2="58" stroke="#202020"/><line x1="246.4" y1="0" x2="246.4" y2="58" stroke="#202020"/><line x1="258.1" y1="0" x2="258.1" y2="58" stroke="#202020"/><line x1="269.9" y1="0" x2="269.9" y2="58" stroke="#202020"/><line x1="281.7" y1="0" x2="281.7" y2="58" stroke="#202020"/><line x1="293.4" y1="0" x2="293.4" y2="58" stroke="#202020"/><line x1="305.2" y1="0" x2="305.2" y2="58" stroke="#202020"/><line x1="316.9" y1="0" x2="316.9" y2="58" stroke="#202020"/><line x1="328.7" y1="0" x2="328.7" y2="58" stroke="#a0a0a0"/><line x1="340.5" y1="0" x2="340.5" y2="58" stroke="#202020"/><line x1="352.2" y1="0" x2="352.2" y2="58" stroke="#202020"/><line x1="364.0" y1="0" x2="364.0" y2="58" stroke="#202020"/><line x1="375.7" y1="0" x2="375.7" y2="58" stroke="#202020"/><line x1="0" y1="13.4" x2="383" y2="13.4" stroke="#5a5a5a"/><line x1="0" y1="56.0" x2="383" y2="56.0" stroke="#5a5a5a"/><rect x="0.5" y="0.5" width="382" height="60" rx="2" fill="none" stroke="#444"/><polyline points="17.4,52.6 40.9,53.7 53.2,52.6 65.5,49.7 76.7,52.6 89.0,55.3 101.4,52.6 124.9,54.2 137.2,49.2 149.5,57.7 161.9,54.8 174.2,54.8 186.5,42.5 197.7,48.1 208.0,60.0 216.7,60.0 222.3,52.6 245.8,53.7 258.2,55.3 269.4,52.6 292.9,52.6 301.0,60.0 321.0,60.0 328.7,53.7 353.3,53.7 366.8,51.9" fill="none" stroke="#c04a50" stroke-width="1.6"/></svg>
<svg style="left:890px;top:614px" width="383" height="58"><rect x="0" y="0.5" width="383" height="58" rx="2" fill="#0a0a0a"/><line x1="11.2" y1="0" x2="11.2" y2="58" stroke="#202020"/><line x1="22.9" y1="0" x2="22.9" y2="58" stroke="#202020"/><line x1="34.7" y1="0" x2="34.7" y2="58" stroke="#202020"/><line x1="46.5" y1="0" x2="46.5" y2="58" stroke="#202020"/><line x1="58.2" y1="0" x2="58.2" y2="58" stroke="#202020"/><line x1="70.0" y1="0" x2="70.0" y2="58" stroke="#202020"/><line x1="81.7" y1="0" x2="81.7" y2="58" stroke="#202020"/><line x1="93.5" y1="0" x2="93.5" y2="58" stroke="#a0a0a0"/><line x1="105.3" y1="0" x2="105.3" y2="58" stroke="#202020"/><line x1="117.0" y1="0" x2="117.0" y2="58" stroke="#202020"/><line x1="128.8" y1="0" x2="128.8" y2="58" stroke="#202020"/><line x1="140.5" y1="0" x2="140.5" y2="58" stroke="#202020"/><line x1="152.3" y1="0" x2="152.3" y2="58" stroke="#202020"/><line x1="164.1" y1="0" x2="164.1" y2="58" stroke="#202020"/><line x1="175.8" y1="0" x2="175.8" y2="58" stroke="#202020"/><line x1="187.6" y1="0" x2="187.6" y2="58" stroke="#202020"/><line x1="199.3" y1="0" x2="199.3" y2="58" stroke="#202020"/><line x1="211.1" y1="0" x2="211.1" y2="58" stroke="#a0a0a0"/><line x1="222.9" y1="0" x2="222.9" y2="58" stroke="#202020"/><line x1="234.6" y1="0" x2="234.6" y2="58" stroke="#202020"/><line x1="246.4" y1="0" x2="246.4" y2="58" stroke="#202020"/><line x1="258.1" y1="0" x2="258.1" y2="58" stroke="#202020"/><line x1="269.9" y1="0" x2="269.9" y2="58" stroke="#202020"/><line x1="281.7" y1="0" x2="281.7" y2="58" stroke="#202020"/><line x1="293.4" y1="0" x2="293.4" y2="58" stroke="#202020"/><line x1="305.2" y1="0" x2="305.2" y2="58" stroke="#202020"/><line x1="316.9" y1="0" x2="316.9" y2="58" stroke="#202020"/><line x1="328.7" y1="0" x2="328.7" y2="58" stroke="#a0a0a0"/><line x1="340.5" y1="0" x2="340.5" y2="58" stroke="#202020"/><line x1="352.2" y1="0" x2="352.2" y2="58" stroke="#202020"/><line x1="364.0" y1="0" x2="364.0" y2="58" stroke="#202020"/><line x1="375.7" y1="0" x2="375.7" y2="58" stroke="#202020"/><line x1="0" y1="10.5" x2="383" y2="10.5" stroke="#5a5a5a"/><rect x="0.5" y="0.5" width="382" height="60" rx="2" fill="none" stroke="#444"/><polyline points="52.0,58.0 52.0,57.0 79.0,57.0 79.0,58.0" fill="none" stroke="#c04a50" stroke-width="1.6"/><polyline points="221.0,58.0 221.0,57.0 331.0,57.0 331.0,58.0" fill="none" stroke="#c04a50" stroke-width="1.6"/><polyline points="15.0,59.0 17.4,55.0 20.0,59.0" fill="none" stroke="#c04a50" stroke-width="1.6"/><polyline points="352.0,59.0 354.5,55.0 357.0,59.0" fill="none" stroke="#c04a50" stroke-width="1.6"/></svg>
<div class="r" style="left:1280px;top:0px;width:2px;height:672px;background:#17191b;"></div>
<div class="r" style="left:1282px;top:0px;width:2.3px;height:672px;background:#4f5459;"></div>
<div class="r" style="left:1284.3px;top:0px;width:1.7px;height:672px;background:#2d3034;"></div>
<div class="r" style="left:1286px;top:0px;width:500px;height:672px;background:#2a2a2a;"></div>
<svg style="left:1284px;top:0px" width="502" height="672"><circle cx="56.9" cy="38" r="11.3" fill="none" stroke="#e8e8e8" stroke-width="2.2"/><rect x="55.3" y="31.6" width="3.2" height="2.9" fill="#f0f0f0"/><rect x="55.3" y="36.2" width="3.2" height="8.2" fill="#f0f0f0"/><line x1="27" y1="75.5" x2="502" y2="75.5" stroke="#e0e0e0" stroke-width="1"/><ellipse cx="158.4" cy="47" rx="123.2" ry="40.8" fill="none" stroke="#e41212" stroke-width="3.5" transform="rotate(-0.8 158.4 47)"/></svg>
<div class="s" style="left:1382.50px;top:23.70px;font-size:30px;color:#ffffff;font-weight:700;letter-spacing:0px">Information</div>
<div class="r" style="left:1393px;top:89px;width:400px;height:47px;background:#1f2024;border:2px solid #7ccfd6;box-sizing:border-box;border-radius:2px"></div>
<svg style="left:1284px;top:0px" width="502" height="672"><circle cx="143.3" cy="113.6" r="8.8" fill="none" stroke="#e8e8e8" stroke-width="2"/><circle cx="143.3" cy="109.2" r="1.3" fill="#e8e8e8"/><rect x="142.2" y="111.6" width="2.2" height="6.5" fill="#e8e8e8"/><line x1="112" y1="173.5" x2="502" y2="173.5" stroke="#4a4a4a"/><line x1="112" y1="215.5" x2="502" y2="215.5" stroke="#4a4a4a"/><line x1="112" y1="254.5" x2="502" y2="254.5" stroke="#4a4a4a"/><line x1="112" y1="296.5" x2="502" y2="296.5" stroke="#4a4a4a"/></svg>
<div class="s" style="left:1459.00px;top:99.12px;font-size:21px;color:#ffffff;font-weight:400;letter-spacing:0.3px">System Information</div>
<div class="s" style="left:1408.50px;top:138.13px;font-size:15.5px;color:#a8a8a8;font-weight:400;letter-spacing:0.1px">View information specific to the device.</div>
<svg style="left:1414px;top:184px" width="28" height="22" viewBox="0 0 28 22"><path d="M2 8 A17 17 0 0 1 24 8" fill="none" stroke="#f0f0f0" stroke-width="2.6" stroke-linecap="round"/><path d="M6 12 A11 11 0 0 1 20 12" fill="none" stroke="#f0f0f0" stroke-width="2.6" stroke-linecap="round"/><path d="M9.6 15.6 A5.5 5.5 0 0 1 16.4 15.6" fill="none" stroke="#f0f0f0" stroke-width="2.6" stroke-linecap="round"/><circle cx="13" cy="19.5" r="1.6" fill="#f0f0f0"/></svg>
<div class="s" style="left:1460.00px;top:179.32px;font-size:21px;color:#ffffff;font-weight:400;letter-spacing:0.4px">Network Information</div>
<div class="s" style="left:1408.80px;top:219.53px;font-size:15.5px;color:#a8a8a8;font-weight:400;letter-spacing:0.1px">View network interface(s) and associated IP addresses</div>
<svg style="left:1416px;top:265px" width="23" height="22" viewBox="0 0 23 22"><ellipse cx="11" cy="3.5" rx="10" ry="3.2" fill="#f0f0f0"/><path d="M1 6.5 Q11 11 21 6.5 L21 11 Q11 15.5 1 11 Z" fill="#f0f0f0"/><path d="M1 14 Q11 18.5 21 14 L21 17.5 Q11 23 1 17.5 Z" fill="#f0f0f0"/></svg>
<div class="s" style="left:1459.80px;top:260.92px;font-size:21px;color:#ffffff;font-weight:400;letter-spacing:0.1px">Database Manager</div>
<div class="s" style="left:1408.80px;top:300.53px;font-size:15.5px;color:#a8a8a8;font-weight:400;letter-spacing:0.1px">View databases.</div>
<svg style="left:0px;top:0px" width="1786" height="672"><ellipse cx="1021.2" cy="370" rx="85.4" ry="44.6" fill="none" stroke="#e41212" stroke-width="3.5"/></svg>
</body></html>
